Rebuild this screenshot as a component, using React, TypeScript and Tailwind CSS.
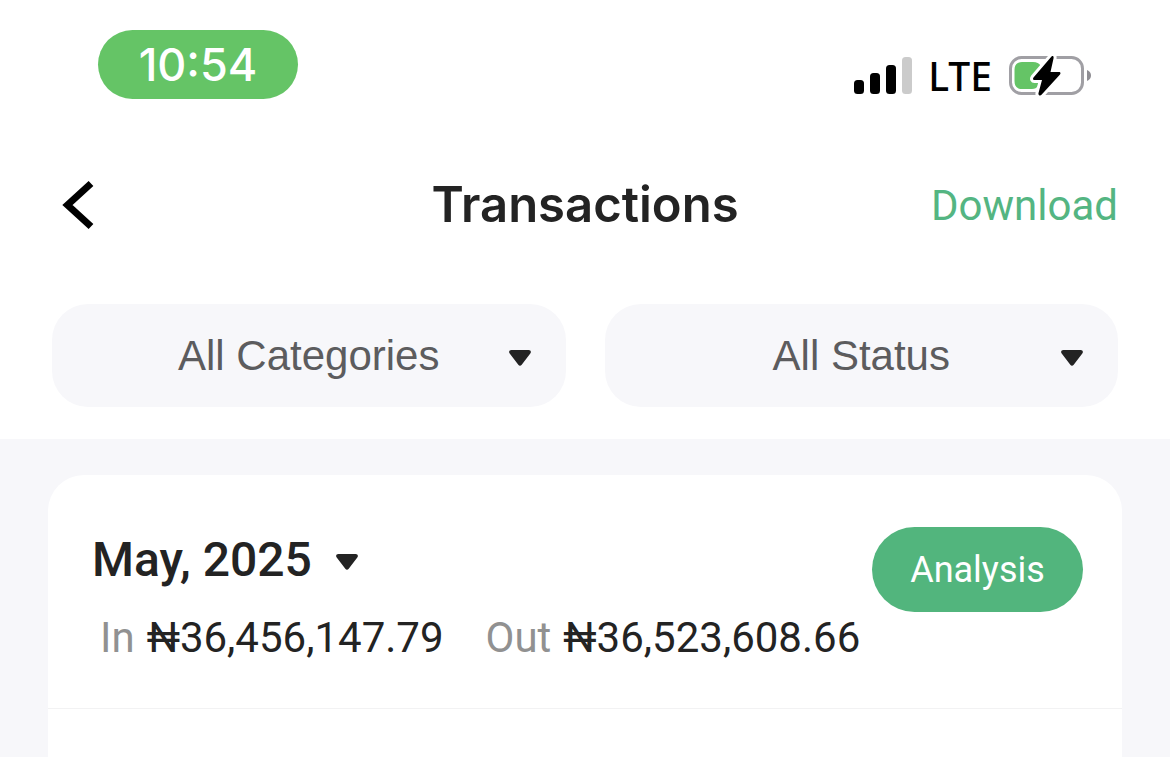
interface FilterSelectProps {
  label: string;
  options: string[];
}

interface AmountProps {
  label: string;
  value: string;
}

function Caret({ className = "" }: { className?: string }) {
  return (
    <svg
      viewBox="0 0 22 16"
      className={`pointer-events-none h-4 w-[22px] shrink-0 fill-[#232323] ${className}`}
      aria-hidden="true"
    >
      <path d="M2.4 0h17.2c2 0 3 2 1.7 3.6l-8.6 11.2c-.9 1.2-2.500 1.200-3.400 0L.7 3.600C-.6 2 .4 0 2.400 0Z" />
    </svg>
  );
}

function SignalIcon() {
  return (
    <svg viewBox="0 0 58 38" className="h-[38px] w-[58px]" role="img" aria-label="Signal">
      <rect x="0" y="23" width="10" height="14" rx="3.500" />
      <rect x="16" y="16" width="10" height="21" rx="3.500" />
      <rect x="32" y="8" width="10" height="29" rx="3.500" />
      <rect x="48" y="0" width="10" height="37" rx="3.500" fill="#cbcbcb" />
    </svg>
  );
}

function BatteryIcon() {
  const bolt =
    "M43.500.5 25.500 21.500c-1 1.300-.3 2.500 1 2.500h7.500L30.500 37c-.5 2.300 1.700 3.300 3 1.700L52 18.500c1-1.300.300-2.500-1-2.500h-8.500L45.500 2.500C46 .3 44.800-.9 43.500.5Z";
  return (
    <svg viewBox="0 0 84 41" className="h-[41px] w-[84px]" role="img" aria-label="Charging">
      <rect x="2.500" y="1.500" width="72" height="36" rx="11" fill="none" stroke="#a09fa4" strokeWidth="3" />
      <path d="M79 14c2.700 1 4 3 4 5.500s-1.300 4.500-4 5.500Z" fill="#8f8e93" />
      <path
        d="M14 6h11c4 0 6 1.500 7.500 3.500L30 20v10c-1.500 2-3 3-6 3H14c-5 0-7.500-3-7.500-8V14c0-5 2.500-8 7.500-8Z"
        fill="#65c466"
      />
      <path d={bolt} fill="#fff" stroke="#fff" strokeWidth="6" strokeLinejoin="round" />
      <path d={bolt} fill="#000" />
    </svg>
  );
}

/** Phone status bar: clock pill on the left, network and battery on the right. */
function StatusBar() {
  return (
    <div className="flex items-start justify-between pt-[30px] pr-[78px] pl-[98px]">
      <time className="flex h-[69px] w-[200px] items-center justify-center rounded-full bg-[#65c466] font-[Inter,sans-serif] text-[45px] font-medium text-white">
        10:54
      </time>
      <div className="flex items-center gap-4 pt-6">
        <SignalIcon />
        <span className="font-['Noto_Sans',sans-serif] text-[39px] leading-[44px] font-medium text-black">
          LTE
        </span>
        <BatteryIcon />
      </div>
    </div>
  );
}

function FilterSelect({ label, options }: FilterSelectProps) {
  return (
    <div className="relative flex-1">
      <select
        aria-label={label}
        className="h-[103px] w-full appearance-none rounded-[36px] bg-[#f7f7fa] text-center font-['Liberation_Sans',sans-serif] text-[42px] text-[#5c5c5e]"
      >
        {options.map((option) => (
          <option key={option}>{option}</option>
        ))}
      </select>
      <Caret className="absolute top-[46px] right-[35px]" />
    </div>
  );
}

function Amount({ label, value }: AmountProps) {
  return (
    <p className="flex gap-3">
      <span className="text-[#919191]">{label}</span>
      <span>{value}</span>
    </p>
  );
}

export default function App() {
  return (
    <div className="flex min-h-screen flex-col bg-white font-[Roboto,sans-serif] text-[#232323]">
      <StatusBar />

      <header className="grid grid-cols-[1fr_auto_1fr] items-center px-[52px] pt-[70px] pb-[63px]">
        <button type="button" aria-label="Back" className="justify-self-start pl-[10px]">
          <svg viewBox="0 0 32 50" className="h-[50px] w-8" aria-hidden="true">
            <path d="M29 3.500 5.500 25 29 46.500" fill="none" stroke="#000" strokeWidth="7" />
          </svg>
        </button>
        <h1 className="font-[Inter,sans-serif] text-[49px] leading-[72px] font-semibold">
          Transactions
        </h1>
        <a href="#download" className="justify-self-end text-[42px] text-[#54b582]">
          Download
        </a>
      </header>

      <div className="flex gap-[39px] px-[52px] pb-8">
        <FilterSelect label="Category" options={["All Categories"]} />
        <FilterSelect label="Status" options={["All Status"]} />
      </div>

      <main className="flex flex-1 flex-col bg-[#f7f7fa] px-12 pt-9">
        <section className="flex-1 rounded-t-[36px] bg-white">
          <div className="flex items-start justify-between border-b border-[#f2f2f3] pt-[52px] pr-[39px] pb-[42px] pl-11">
            <div>
              <div className="flex items-center gap-6 pt-px">
                <select
                  aria-label="Month"
                  className="appearance-none text-[48px] leading-[64px] font-medium"
                >
                  <option>May, 2025</option>
                </select>
                <Caret className="mt-1" />
              </div>
              <div className="flex gap-[42px] pt-[18px] pl-2 text-[42px] leading-[56px]">
                <Amount label="In" value="₦36,456,147.79" />
                <Amount label="Out" value="₦36,523,608.66" />
              </div>
            </div>
            <button
              type="button"
              className="-ml-10 h-[85px] w-[211px] shrink-0 rounded-full bg-[#52b57d] text-[36px] text-white"
            >
              Analysis
            </button>
          </div>
        </section>
      </main>
    </div>
  );
}
